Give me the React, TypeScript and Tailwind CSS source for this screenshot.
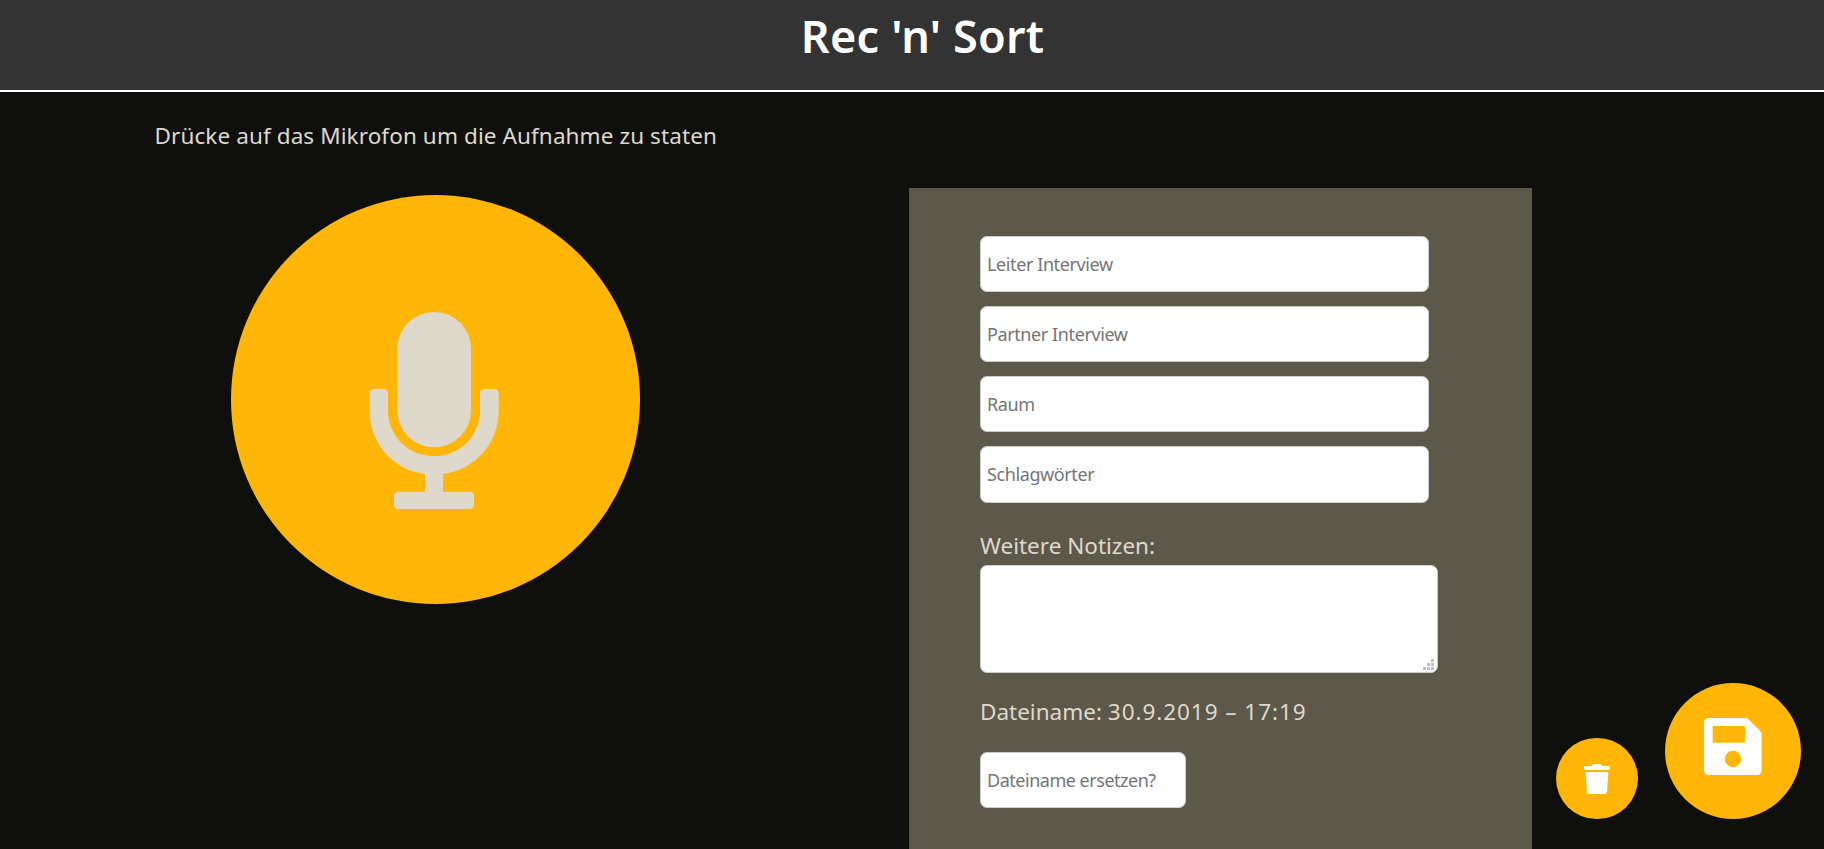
const inputClass =
  "block rounded-[7px] border border-[#cccccc] bg-white px-[6px] text-[18px] text-[#333] outline-none placeholder:text-[#757575] placeholder:opacity-100";

const fields = [
  { name: "Leiter Interview", size: "h-[56px]" },
  { name: "Partner Interview", size: "h-[56px]" },
  { name: "Raum", size: "h-[56px]" },
  { name: "Schlagwörter", size: "h-[57px] pb-[1px]" },
];

function MicIcon() {
  return (
    <svg className="h-[198px] w-[130px]" viewBox="-1 0 390 594" fill="#dfd9cc">
      <rect x="84" y="3" width="221" height="406" rx="110.5" />
      <path d="M15 234H42Q56 234 56 248V299A138 137 0 0 0 332 299V248Q332 234 346 234H374Q388 234 388 248V299C388 397 317 476 221 489V542H300Q314 542 314 556V580Q314 594 300 594H88Q74 594 74 580V556Q74 542 88 542H167V489C71 476 1 397 1 299V248Q1 234 15 234Z" />
    </svg>
  );
}

function SaveIcon() {
  return (
    <svg className="h-[57px] w-[58px]" viewBox="0 0 174 171" fill="#ffffff">
      <path
        fillRule="evenodd"
        d="M16 0H123Q130 0 135 5L168 38Q173 43 173 50V155Q173 171 157 171H16Q0 171 0 155V16Q0 0 16 0ZM29 24Q26 24 26 27V71Q26 74 29 74H120Q123 74 123 71V27Q123 24 120 24ZM87 98.500A24.500 24.500 0 1 0 87 147.500A24.500 24.500 0 1 0 87 98.500Z"
      />
    </svg>
  );
}

function TrashIcon() {
  return (
    <svg className="h-[30px] w-[26px]" viewBox="0 0 78 90" fill="#ffffff">
      <path d="M4 6H23Q26 0 31 0H47Q52 0 55 6H74Q78 6 78 10V14Q78 18 74 18H4Q0 18 0 14V10Q0 6 4 6Z" />
      <path d="M5 24H73L69 83Q68 90 61 90H17Q10 90 9 83Z" />
    </svg>
  );
}

export default function App() {
  return (
    <div className="flex h-[849px] w-full flex-col overflow-hidden bg-[#0f0f0d] font-['Noto_Sans',sans-serif] text-[#dfd9cc]">
      <header className="h-[92px] shrink-0 border-b-2 border-white bg-[#333333] pl-[21px] pt-[6px] text-center">
        <h1 className="text-[45px] leading-[60px] font-[560] tracking-[0.2px] text-white">Rec 'n' Sort</h1>
      </header>
      <p className="h-[96px] shrink-0 pt-[28px] pl-[154.5px] text-[22.5px] leading-[32px] tracking-[0.1px]">
        Drücke auf das Mikrofon um die Aufnahme zu staten
      </p>
      <main className="flex min-h-0 flex-1">
        <section className="w-[909px] shrink-0 pt-[7px] pl-[231px]">
          <button
            type="button"
            aria-label="Aufnahme starten"
            className="flex h-[409px] w-[409px] justify-center rounded-full bg-[#ffb606] pt-[116px] pr-[3px]"
          >
            <MicIcon />
          </button>
        </section>

        <form className="w-[623px] shrink-0 bg-[#5c584a] pt-[48px] pl-[71px]">
          <div className="flex flex-col gap-[14px]">
            {fields.map(({ name, size }) => (
              <input key={name} placeholder={name} className={`${inputClass} ${size} w-[449px] tracking-[-0.4px]`} />
            ))}
          </div>
          <label className="mt-[27px] block text-[22.5px] leading-[32px]" htmlFor="notes">
            Weitere Notizen:
          </label>
          <div className="relative mt-[3px] h-[108px] w-[458px]">
            <textarea
              id="notes"
              className="block h-full w-full resize-none rounded-[7px] border border-[#cccccc] bg-white p-[7px] text-[18px] text-[#333] outline-none"
            />
            <svg className="pointer-events-none absolute right-[4px] bottom-[3px] h-[11px] w-[11px]" viewBox="0 0 11 11" fill="#bfbfbf">
              <path d="M8 0h3v3h-3zM4 4h3v3h-3zM8 4h3v3h-3zM0 8h3v3h-3zM4 8h3v3h-3zM8 8h3v3h-3z" />
            </svg>
          </div>
          <p className="mt-[23px] text-[22.5px] leading-[32px]">
            Dateiname: <span className="tracking-[0.95px]">30.9.2019 – 17:19</span>
          </p>
          <input
            placeholder="Dateiname ersetzen?"
            className={`${inputClass} mt-[24px] h-[56px] w-[206px] tracking-[-0.48px]`}
          />
        </form>

        <aside className="flex flex-1 items-end gap-[27px] pb-[30px] pl-[24px]">
          <button
            type="button"
            aria-label="Löschen"
            className="flex h-[81px] w-[82px] shrink-0 justify-center rounded-full bg-[#ffb606] pt-[26px]"
          >
            <TrashIcon />
          </button>
          <button
            type="button"
            aria-label="Speichern"
            className="flex h-[136px] w-[136px] shrink-0 justify-center rounded-full bg-[#ffb606] pt-[35px]"
          >
            <SaveIcon />
          </button>
        </aside>
      </main>
    </div>
  );
}
